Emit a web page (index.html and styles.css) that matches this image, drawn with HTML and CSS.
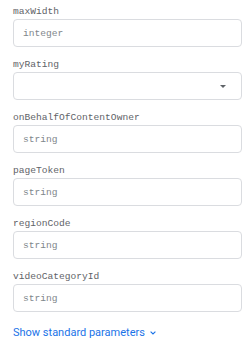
FILE: index.html
```html
<!DOCTYPE html>
<html lang="en">
<head>
    <meta charset="UTF-8">
    <meta name="viewport" content="width=device-width, initial-scale=1.0">
    <title>Parameters</title>
    <link rel="stylesheet" href="styles.css">
</head>
<body>
    <div class="params">
        <div class="field">
            <label class="field-label">maxWidth</label>
            <input class="field-input" type="text" placeholder="integer">
        </div>
        <div class="field">
            <label class="field-label">myRating</label>
            <div class="field-select">
                <span class="select-arrow"></span>
            </div>
        </div>
        <div class="field">
            <label class="field-label">onBehalfOfContentOwner</label>
            <input class="field-input" type="text" placeholder="string">
        </div>
        <div class="field">
            <label class="field-label">pageToken</label>
            <input class="field-input" type="text" placeholder="string">
        </div>
        <div class="field">
            <label class="field-label">regionCode</label>
            <input class="field-input" type="text" placeholder="string">
        </div>
        <div class="field">
            <label class="field-label">videoCategoryId</label>
            <input class="field-input" type="text" placeholder="string">
        </div>
        <a class="show-more" href="#">
            Show standard parameters
            <svg width="6" height="4" viewBox="0 0 6 4"><path d="M0.6 0.6 L3 3 L5.4 0.6" fill="none" stroke="#1a73e8" stroke-width="1.1"/></svg>
        </a>
    </div>
</body>
</html>
```

FILE: styles.css
```css
/* Styles généraux */
body, html {
    margin: 0;
    padding: 0;
    background: #fff;
    font-family: 'Roboto', 'Liberation Sans', sans-serif;
}

.params {
    padding: 5px 8px 0 13px;
    display: flex;
    flex-direction: column;
}

/* Champs */
.field {
    display: flex;
    flex-direction: column;
    margin-bottom: 11px;
}

.field-label {
    font-family: 'Liberation Mono', monospace;
    font-size: 9.6px;
    line-height: 14px;
    color: #5f6368;
}

.field-input,
.field-select {
    box-sizing: border-box;
    width: 100%;
    height: 28px;
    margin: 0;
    padding: 0 9px;
    border: 1px solid #dadce0;
    border-radius: 4px;
    background: #fff;
    font-family: 'Liberation Mono', monospace;
    font-size: 9.6px;
    color: #202124;
    outline: none;
}

.field-input::placeholder {
    color: #80868b;
}

.field-select {
    display: flex;
    align-items: center;
    justify-content: flex-end;
    padding-right: 15px;
}

.select-arrow {
    width: 0;
    height: 0;
    border-left: 3px solid transparent;
    border-right: 3px solid transparent;
    border-top: 3px solid #5f6368;
}

/* Lien */
.show-more {
    margin-top: 3px;
    display: flex;
    align-items: center;
    gap: 5px;
    font-size: 11px;
    line-height: 14px;
    color: #1a73e8;
    text-decoration: none;
}
```
